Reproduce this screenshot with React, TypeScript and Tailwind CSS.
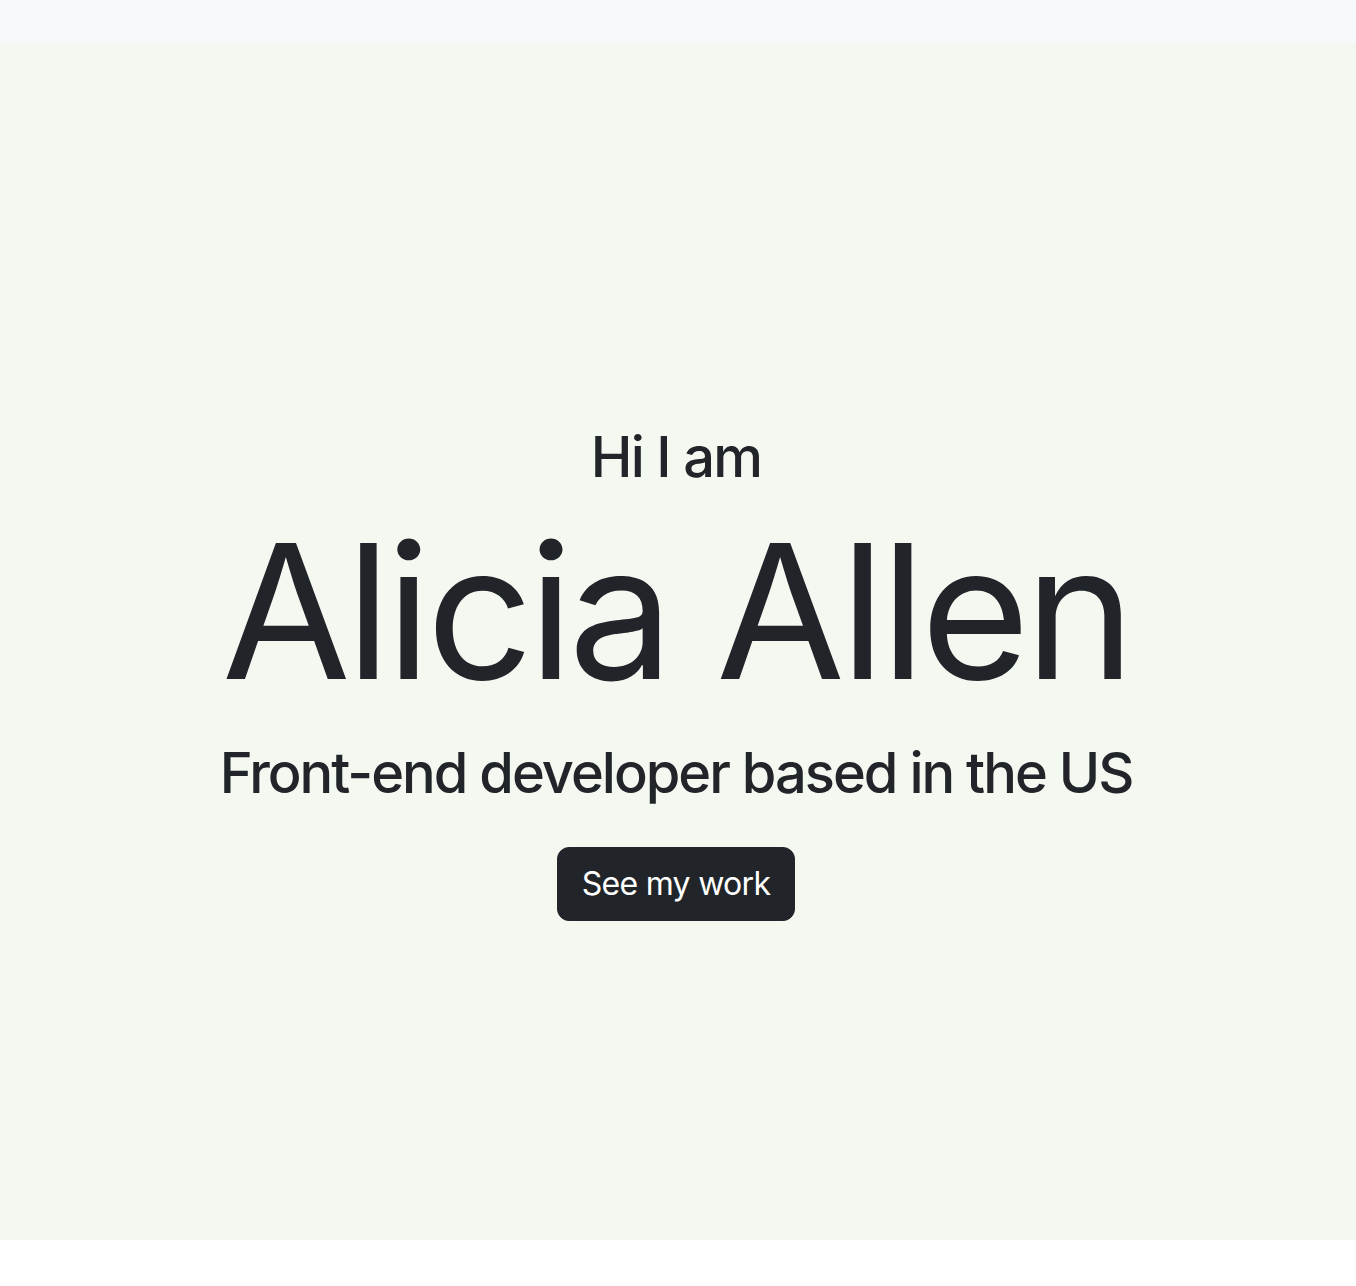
const App = () => {
  return (
    <div className="min-h-screen bg-white font-['Inter','Liberation_Sans',sans-serif] text-[#212529]">
      <div className="h-[43px] bg-[#f8f9fa]"></div>
      <section className="flex h-[1197px] flex-col items-center bg-[#f3f8f1] pt-[381px] pr-[4px]">
        <h3 className="mb-[8px] text-[56px] font-medium leading-[1.2] tracking-[-1.7px]">Hi I am</h3>
        <h1 className="mb-[16px] text-[187px] font-normal leading-[1.2] tracking-[-5px]">Alicia Allen</h1>
        <h3 className="mb-[40px] text-[56px] font-medium leading-[1.2] tracking-[-2px]">
          Front-end developer based in the US
        </h3>
        <button className="rounded-[12px] border border-[#212529] bg-[#212529] px-[24px] py-[12px] text-[32px] leading-[1.5] tracking-[-0.7px] text-white">
          See my work
        </button>
      </section>
    </div>
  );
};

export default App;
